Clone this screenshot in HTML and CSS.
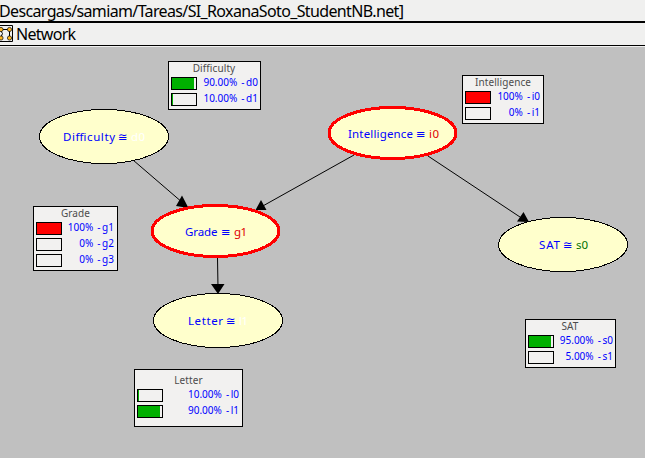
FILE: index.html
```
<!DOCTYPE html>
<html lang="en">
<head>
<meta charset="utf-8">
<title>Network</title>
<link rel="stylesheet" href="styles.css">
</head>
<body>
<header class="path"><span>Descargas/samiam/Tareas/SI_RoxanaSoto_StudentNB.net]</span></header>
<nav class="toolbar">
  <svg class="icon" width="13" height="17" viewBox="0 0 13 17">
    <path d="M0 .5H12.5V16.5H0" fill="#f0f0ef" stroke="#000"/>
    <path d="M1 4.500H9.500M1 6L2.500 8.500L1 12M9.500 5V12" fill="none" stroke="#000"/>
    <g fill="#ffb620" stroke="#000" stroke-width=".7"><circle cx="1" cy="4.500" r="2.100"/><circle cx="9.500" cy="4.500" r="2.100"/><circle cx="1" cy="13" r="2.100"/><circle cx="9.500" cy="13" r="2.100"/></g>
  </svg>
  <span class="tool">Network</span>
</nav>
<main class="canvas">
  <svg class="graph" width="645" height="410" viewBox="0 47 645 410">
    <g class="edge">
      <path d="M133 160L183 203M354 155L261 207M428 156L523 219M217.500 258L218 288"/>
      <path class="head" d="M176 206L182 195.500L188.500 208ZM255.500 210L261 200L266.500 210ZM523.500 212L517 221.500L529 222ZM211 284H224.500L218 294Z"/>
    </g>
    <g class="node">
      <ellipse cx="104" cy="136.500" rx="64.500" ry="27"/>
      <ellipse class="observed" cx="392.500" cy="133" rx="63.500" ry="25.500"/>
      <ellipse class="observed" cx="215.500" cy="231" rx="63.500" ry="25.500"/>
      <ellipse cx="218" cy="320.500" rx="64.500" ry="27"/>
      <ellipse cx="563" cy="244.500" rx="64.500" ry="27"/>
    </g>
    <g class="name">
      <text x="63" y="141" textLength="52">Difficulty</text><text class="sign" x="118" y="141" textLength="10">≅</text><text class="white" x="131" y="141" textLength="14">d0</text>
      <text x="348" y="138" textLength="65">Intelligence</text><text class="sign" x="416" y="138" textLength="10">≡</text><text class="red" x="429" y="138" textLength="10">i0</text>
      <text x="185" y="236" textLength="32.500">Grade</text><text class="sign" x="221" y="236" textLength="10">≡</text><text class="red" x="234" y="236" textLength="13">g1</text>
      <text x="188" y="325" textLength="35">Letter</text><text class="sign" x="226" y="325" textLength="10">≅</text><text class="white" x="239" y="325" textLength="9">l1</text>
      <text x="539" y="249" textLength="21">SAT</text><text class="sign" x="563" y="249" textLength="10">≅</text><text class="green" x="576" y="249" textLength="12">s0</text>
    </g>
  </svg>
  <section class="monitor difficulty"><h2>Difficulty</h2>
    <div class="row"><i class="bar"><b style="width:91%"></b></i><span>90.00%</span><em>- d0</em></div>
    <div class="row"><i class="bar"><b style="width:6%"></b></i><span>10.00%</span><em>- d1</em></div></section>
  <section class="monitor intelligence"><h2>Intelligence</h2>
    <div class="row"><i class="bar full"><b style="width:100%"></b></i><span>100%</span><em>- i0</em></div>
    <div class="row"><i class="bar"></i><span>0%</span><em>- i1</em></div></section>
  <section class="monitor grade"><h2>Grade</h2>
    <div class="row"><i class="bar full"><b style="width:100%"></b></i><span>100%</span><em>- g1</em></div>
    <div class="row"><i class="bar"></i><span>0%</span><em>- g2</em></div>
    <div class="row"><i class="bar"></i><span>0%</span><em>- g3</em></div></section>
  <section class="monitor sat"><h2>SAT</h2>
    <div class="row"><i class="bar"><b style="width:93%"></b></i><span>95.00%</span><em>- s0</em></div>
    <div class="row"><i class="bar"></i><span>5.00%</span><em>- s1</em></div></section>
  <section class="monitor letter"><h2>Letter</h2>
    <div class="row"><i class="bar"><b style="width:6%"></b></i><span>10.00%</span><em>- l0</em></div>
    <div class="row"><i class="bar"><b style="width:91%"></b></i><span>90.00%</span><em>- l1</em></div></section>
</main>
</body>
</html>
```
FILE: styles.css
```
* { box-sizing: border-box; }
body { margin: 0; width: 645px; height: 458px; overflow: hidden; background: #c0c0c0; font-family: "Noto Sans", "Open Sans", sans-serif; color: #000; }
.path { height: 23px; background: #f0f0ef; border-bottom: 2px solid #000; font-size: 16px; line-height: 22px; white-space: nowrap; letter-spacing: -.64px; }
.path span { margin-left: -1px; }
.toolbar { display: flex; height: 23px; padding-top: 2px; background: #f0f0ef; border-bottom: 1px solid #000; }
.tool { margin-left: 3px; font-size: 16px; line-height: 19px; letter-spacing: -.7px; }
.icon { display: block; }
.canvas { position: relative; height: 412px; background: #c0c0c0; border-top: 1px solid #f0f0ef; }
.graph { display: block; }
.edge { fill: none; stroke: #000; stroke-width: 1; }
.head { fill: #000; stroke: none; }
.node ellipse { fill: #ffffcc; stroke: #000; stroke-width: 1; shape-rendering: crispEdges; }
.node .observed { stroke: #f00; stroke-width: 3; }
.name { font-size: 11.5px; fill: #00f; }
.name .sign { font-family: "DejaVu Sans", sans-serif; }
.name .white { fill: #fff; }
.name .red { fill: #e00000; }
.name .green { fill: #007000; }
.monitor { position: absolute; height: 49px; padding: 0 2px; border: 1px solid #000; background: #f2f1f0; color: #00f; font-size: 10px; }
.monitor h2 { margin: 0; height: 15px; font-size: 10px; line-height: 13px; font-weight: normal; text-align: center; color: #4c4c4c; letter-spacing: .1px; }
.row { display: flex; height: 13px; margin-bottom: 3px; line-height: 11px; white-space: nowrap; }
.bar { width: 26px; height: 13px; border: 1px solid #000; }
.bar b { display: block; height: 11px; background: #00b000; }
.bar.full b { background: #f00; }
.row span { flex: 1; text-align: right; padding-right: 4px; }
.row em { font-style: normal; word-spacing: -1px; padding-right: 1px; }
.difficulty { left: 168px; top: 14px; width: 93px; padding-right: 1px; }
.difficulty h2 { padding-right: 2px; }
.intelligence { left: 462px; top: 28px; width: 82px; }
.grade { left: 33px; top: 159px; width: 85px; height: 65px; }
.sat { left: 525px; top: 272px; width: 91px; padding-right: 1px; }
.sat h2 { padding-right: 2px; }
.letter { left: 134px; top: 322px; width: 109px; height: 58px; padding-top: 4px; }
```
